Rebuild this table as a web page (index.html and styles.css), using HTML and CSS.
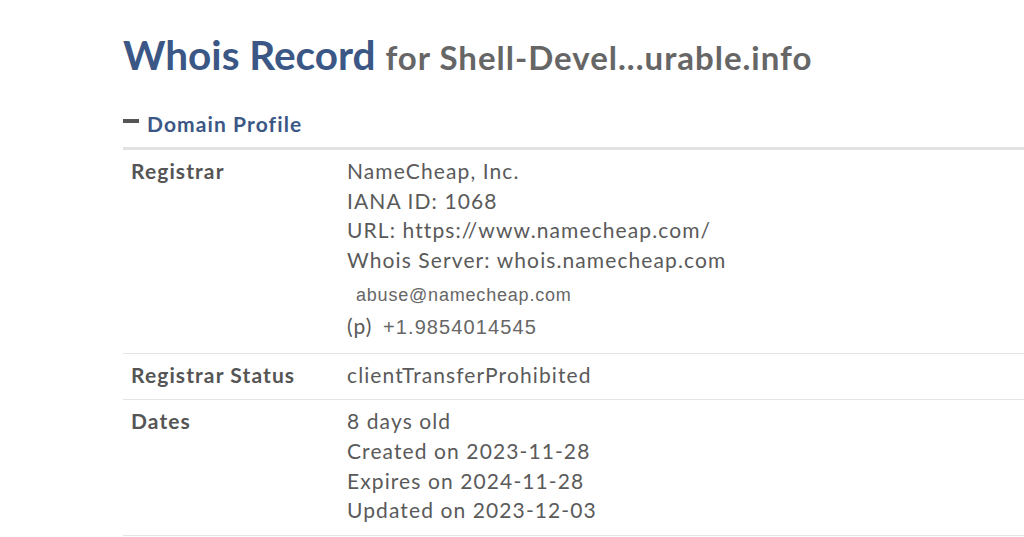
FILE: index.html
```html
<!DOCTYPE html>
<html lang="en">
<head>
  <meta charset="UTF-8" />
  <title>Whois Record</title>
  <link rel="stylesheet" href="styles.css">
</head>
<body>
  <div class="page">
    <h1 class="title">Whois Record <span class="for">for Shell-Devel...urable.info</span></h1>

    <div class="section">
      <div class="section-head">
        <span class="minus"></span>
        <span>Domain Profile</span>
      </div>

      <table class="profile">
        <tr>
          <td class="label">Registrar</td>
          <td class="value">
            <div>NameCheap, Inc.</div>
            <div>IANA ID: 1068</div>
            <div>URL: https://www.namecheap.com/</div>
            <div>Whois Server: whois.namecheap.com</div>
            <div class="email">abuse@namecheap.com</div>
            <div class="phone">(p) <span class="num">+1.9854014545</span></div>
          </td>
        </tr>
        <tr>
          <td class="label">Registrar Status</td>
          <td class="value">clientTransferProhibited</td>
        </tr>
        <tr>
          <td class="label">Dates</td>
          <td class="value">
            <div>8 days old</div>
            <div>Created on 2023-11-28</div>
            <div>Expires on 2024-11-28</div>
            <div>Updated on 2023-12-03</div>
          </td>
        </tr>
      </table>
    </div>
  </div>
</body>
</html>
```

FILE: styles.css
```css
* {
  box-sizing: border-box;
}

body {
  margin: 0;
  background: #fff;
  font-family: Lato, 'Open Sans', sans-serif;
  color: #5a5a5a;
  overflow: hidden;
}

.page {
  padding: 27px 0 0 123px;
  width: 1200px;
}

.title {
  margin: 0;
  font-size: 40.5px;
  font-weight: 700;
  color: #3b5785;
  line-height: 56px;
}

.title .for {
  font-size: 33px;
  letter-spacing: 1px;
  color: #666;
}

.section {
  margin-top: 26px;
}

.section-head {
  display: flex;
  align-items: center;
  gap: 8px;
  font-size: 21px;
  line-height: 26px;
  letter-spacing: 1.1px;
  font-weight: 700;
  color: #3b5785;
  padding-bottom: 10px;
  border-bottom: 3px solid #e2e2e2;
}

.minus {
  display: inline-block;
  width: 16px;
  height: 4px;
  background: #555;
  margin-top: -6px;
}

.profile {
  width: 100%;
  border-collapse: collapse;
  font-size: 21px;
  line-height: 29.7px;
  letter-spacing: 1.1px;
}

.profile tr {
  border-bottom: 1px solid #e4e4e4;
}

.profile td {
  vertical-align: top;
  padding: 6px 8px 10px;
}

.label {
  width: 216px;
  font-weight: 700;
  color: #555;
}

.value {
  font-weight: 400;
}

.email {
  font-family: 'Liberation Sans', Arial, sans-serif;
  font-size: 18px;
  letter-spacing: 0.8px;
  color: #666;
  padding: 4px 0 0 9px;
  line-height: 32px;
}

.phone .num {
  font-family: 'Liberation Sans', Arial, sans-serif;
  font-size: 20px;
  color: #666;
  margin-left: 4px;
}
```
